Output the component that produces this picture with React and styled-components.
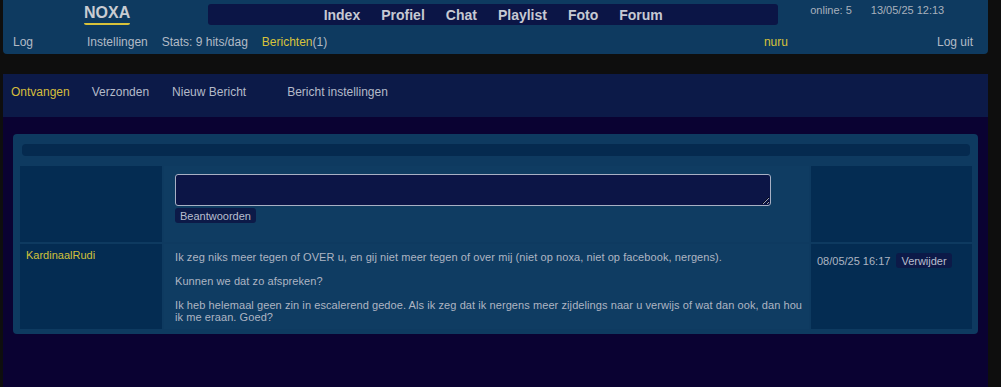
import React from 'react';
import styled, { createGlobalStyle } from 'styled-components';

const GlobalStyle = createGlobalStyle`
  html, body {
    margin: 0;
    padding: 0;
    height: 100%;
    background: #0e0e0e;
    font-family: "Liberation Sans", Arial, sans-serif;
  }
  #root {
    height: 100%;
  }
`;

const Page = styled.div`
  display: flex;
  flex-direction: column;
  width: 985px;
  min-height: 100%;
  margin-left: 3px;
`;

const Header = styled.header`
  background: #0e3a60;
  border-radius: 0 0 4px 4px;
  height: 54px;
  display: flex;
  flex-direction: column;
`;

const TopRow = styled.div`
  display: flex;
  align-items: flex-start;
  height: 30px;
  padding-left: 81px;
`;

const Logo = styled.a`
  margin-top: 4px;
  font-size: 16px;
  font-weight: bold;
  color: #c9ccd2;
  line-height: 18px;
  padding-bottom: 1px;
  border-bottom: 2px solid #d8c23a;
  border-radius: 2px;
  text-decoration: none;
`;

const Nav = styled.nav`
  margin: 4px 0 0 78px;
  width: 570px;
  height: 21px;
  background: #0b1546;
  border-radius: 3px;
  display: flex;
  justify-content: center;
  align-items: center;
  gap: 21px;
`;

const NavLink = styled.a`
  font-size: 14px;
  font-weight: bold;
  color: #c6c9d3;
  text-decoration: none;
`;

const Info = styled.div`
  margin: 4px 0 0 32px;
  display: flex;
  gap: 19px;
  font-size: 11px;
  color: #a9b1bd;
`;

const BottomRow = styled.div`
  display: flex;
  align-items: center;
  height: 24px;
  padding: 0 15px 0 10px;
  font-size: 12px;
  color: #b3bac6;
`;

const Item = styled.span`
  color: ${p => (p.$accent ? '#d8c23a' : '#b3bac6')};
  margin-right: ${p => p.$mr ?? 14}px;
`;

const Spacer = styled.div`
  flex: 1;
`;

const Tabs = styled.div`
  margin-top: 20px;
  height: 43px;
  background: #0c1a48;
  display: flex;
  align-items: flex-start;
  padding: 11px 8px 0;
  box-sizing: border-box;
  font-size: 12px;
  line-height: 14px;
`;

const Tab = styled.a`
  color: ${p => (p.$active ? '#d6bd3c' : '#b4bac8')};
  margin-right: ${p => p.$mr}px;
  text-decoration: none;
`;

const Content = styled.main`
  flex: 1;
  background: #0a0232;
  padding: 17px 10px 20px;
`;

const Box = styled.section`
  background: #0e3a60;
  border-radius: 4px;
  padding: 10px 6px 5px 7px;
`;

const TopBar = styled.div`
  height: 12px;
  margin: 0 2px 10px;
  background: #052a4f;
  border-radius: 4px;
`;

const Grid = styled.div`
  display: grid;
  grid-template-columns: 142px 1fr 161px;
  grid-auto-rows: auto;
  gap: 2px;
`;

const Cell = styled.div`
  background: ${p => (p.$dark ? '#042c52' : '#0f3c62')};
  min-height: ${p => p.$h || 0}px;
  box-sizing: border-box;
  padding: ${p => p.$pad || '6px'};
  font-size: 11px;
  line-height: 12px;
  color: #aeb5c2;
`;

const Reply = styled.textarea`
  display: block;
  width: 596px;
  height: 32px;
  box-sizing: border-box;
  background: #0c1546;
  border: 1px solid #a8b0c4;
  border-radius: 3px;
  color: #ccc;
  resize: both;
  margin: 0;
`;

const SmallButton = styled.button`
  background: #0c1a48;
  color: #b8bece;
  font-family: "Liberation Sans", Arial, sans-serif;
  font-size: 11px;
  line-height: 14px;
  height: 15px;
  border: none;
  border-radius: 3px;
  padding: 0 5px;
  cursor: pointer;
  margin-top: ${p => p.$mt || 0}px;
`;

const Author = styled.a`
  color: #d2c13a;
  text-decoration: none;
  line-height: 13px;
`;

const Para = styled.p`
  margin: 0 0 12px;
  letter-spacing: 0.08px;
  &:last-child {
    margin-bottom: 0;
  }
`;

const Meta = styled.div`
  display: flex;
  align-items: center;
  gap: 6px;
  padding-top: 3px;
`;

export default function App() {
  return (
    <>
      <GlobalStyle />
      <Page>
        <Header>
          <TopRow>
            <Logo href="#">NOXA</Logo>
            <Nav>
              <NavLink href="#">Index</NavLink>
              <NavLink href="#">Profiel</NavLink>
              <NavLink href="#">Chat</NavLink>
              <NavLink href="#">Playlist</NavLink>
              <NavLink href="#">Foto</NavLink>
              <NavLink href="#">Forum</NavLink>
            </Nav>
            <Info>
              <span>online: 5</span>
              <span>13/05/25 12:13</span>
            </Info>
          </TopRow>
          <BottomRow>
            <Item $mr={54}>Log</Item>
            <Item>Instellingen</Item>
            <Item>Stats: 9 hits/dag</Item>
            <Item $mr={0}>
              <Item $accent $mr={0}>Berichten</Item>(1)
            </Item>
            <Spacer />
            <Item $accent $mr={149}>nuru</Item>
            <Item $mr={0}>Log uit</Item>
          </BottomRow>
        </Header>

        <Tabs>
          <Tab href="#" $active $mr={22}>Ontvangen</Tab>
          <Tab href="#" $mr={23}>Verzonden</Tab>
          <Tab href="#" $mr={41}>Nieuw Bericht</Tab>
          <Tab href="#" $mr={0}>Bericht instellingen</Tab>
        </Tabs>

        <Content>
          <Box>
            <TopBar />
            <Grid>
              <Cell $dark $h={76} />
              <Cell $pad="8px 11px">
                <Reply />
                <SmallButton $mt={2}>Beantwoorden</SmallButton>
              </Cell>
              <Cell $dark />

              <Cell $dark $h={84} $pad="5px 6px">
                <Author href="#">KardinaalRudi</Author>
              </Cell>
              <Cell $pad="7px 1px 6px 11px">
                <Para>
                  Ik zeg niks meer tegen of OVER u, en gij niet meer tegen of over mij (niet op noxa, niet op facebook, nergens).
                </Para>
                <Para>Kunnen we dat zo afspreken?</Para>
                <Para>
                  Ik heb helemaal geen zin in escalerend gedoe. Als ik zeg dat ik nergens meer zijdelings naar u verwijs of wat dan ook, dan hou ik me eraan. Goed?
                </Para>
              </Cell>
              <Cell $dark>
                <Meta>
                  <span>08/05/25 16:17</span>
                  <SmallButton>Verwijder</SmallButton>
                </Meta>
              </Cell>
            </Grid>
          </Box>
        </Content>
      </Page>
    </>
  );
}
